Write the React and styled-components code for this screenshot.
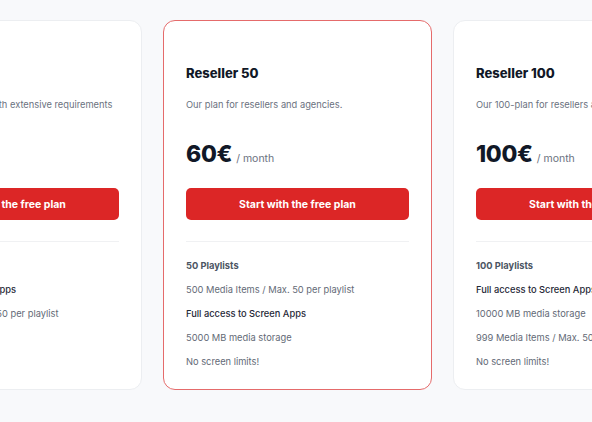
import React from "react";
import styled, { createGlobalStyle } from "styled-components";

const GlobalStyle = createGlobalStyle`
  html, body {
    margin: 0;
    padding: 0;
    background: #f8f9fb;
    overflow: hidden;
  }
  body {
    font-family: Inter, "Noto Sans", sans-serif;
    -webkit-font-smoothing: antialiased;
  }
`;

const Page = styled.div`
  width: 592px;
  height: 422px;
  overflow: hidden;
  background: #f8f9fb;
  padding-top: 20px;
  box-sizing: border-box;
`;

const Row = styled.div`
  display: flex;
  gap: 21px;
  margin-left: -127px;
`;

const Card = styled.div`
  flex: 0 0 269px;
  min-width: 0;
  box-sizing: border-box;
  background: #fff;
  border: 1px solid ${({ highlight }) => (highlight ? "#e56b6b" : "#eceef1")};
  border-radius: 12px;
  padding: 42px 22px 19px;
  display: flex;
  flex-direction: column;
`;

const Title = styled.h3`
  margin: 0;
  font-size: 13px;
  line-height: 20px;
  font-weight: 800;
  color: #111827;
  white-space: nowrap;
`;

const Desc = styled.p`
  margin: 14px 0 0;
  font-size: 9.3px;
  line-height: 16px;
  color: #6b7280;
  white-space: nowrap;
`;

const Price = styled.div`
  margin-top: 25px;
  display: flex;
  align-items: baseline;
  gap: 4px;
  line-height: 32px;
  white-space: nowrap;
`;

const Amount = styled.span`
  font-size: 23px;
  font-weight: 800;
  color: #111827;
  letter-spacing: -0.3px;
`;

const Period = styled.span`
  font-size: 10.5px;
  color: #6b7280;
`;

const Button = styled.button`
  margin-top: 13px;
  height: 32px;
  border: none;
  border-radius: 5px;
  background: #dc2626;
  color: #fff;
  font-family: Inter, sans-serif;
  font-size: 10.5px;
  font-weight: 700;
  white-space: nowrap;
  cursor: pointer;
`;

const Divider = styled.hr`
  margin: 21px 0 0;
  border: none;
  border-top: 1px solid #f0f1f3;
`;

const Features = styled.ul`
  list-style: none;
  margin: 16px 0 0;
  padding: 0;
  display: flex;
  flex-direction: column;
  gap: 8px;
`;

const Feature = styled.li`
  font-size: 9.3px;
  line-height: 16px;
  white-space: nowrap;
  color: ${({ kind }) =>
    kind === "strong" ? "#4b5563" : kind === "access" ? "#1f2937" : "#636a76"};
  font-weight: ${({ kind }) =>
    kind === "strong" ? 700 : kind === "access" ? 500 : 400};
`;

const plans = [
  {
    name: "Business",
    desc: "Our plan for projects with extensive requirements",
    price: "30€",
    features: [
      ["25 Playlists", "strong"],
      ["Full access to Screen Apps", "access"],
      ["99 Media Items / Max. 50 per playlist", ""],
      ["2 GB media storage", ""],
      ["No limits", ""],
    ],
  },
  {
    name: "Reseller 50",
    desc: "Our plan for resellers and agencies.",
    price: "60€",
    highlight: true,
    features: [
      ["50 Playlists", "strong"],
      ["500 Media Items / Max. 50 per playlist", ""],
      ["Full access to Screen Apps", "access"],
      ["5000 MB media storage", ""],
      ["No screen limits!", ""],
    ],
  },
  {
    name: "Reseller 100",
    desc: "Our 100-plan for resellers and agencies.",
    price: "100€",
    features: [
      ["100 Playlists", "strong"],
      ["Full access to Screen Apps", "access"],
      ["10000 MB media storage", ""],
      ["999 Media Items / Max. 50 per playlist", ""],
      ["No screen limits!", ""],
    ],
  },
];

export default function App() {
  return (
    <>
      <GlobalStyle />
      <Page>
        <Row>
          {plans.map((p) => (
            <Card key={p.name} highlight={p.highlight}>
              <Title>{p.name}</Title>
              <Desc>{p.desc}</Desc>
              <Price>
                <Amount>{p.price}</Amount>
                <Period>/ month</Period>
              </Price>
              <Button>Start with the free plan</Button>
              <Divider />
              <Features>
                {p.features.map(([text, kind]) => (
                  <Feature key={text} kind={kind}>
                    {text}
                  </Feature>
                ))}
              </Features>
            </Card>
          ))}
        </Row>
      </Page>
    </>
  );
}
